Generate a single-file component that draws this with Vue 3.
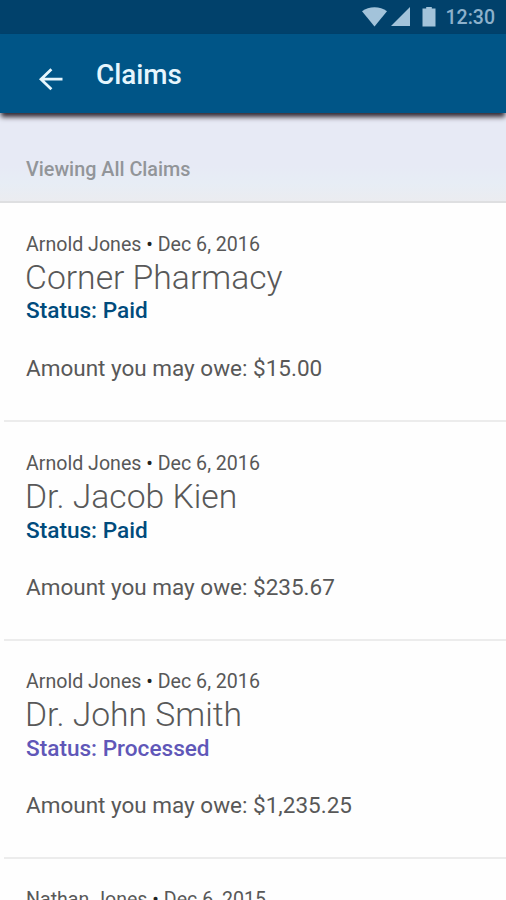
<script setup>
const claims = [
  { person: 'Arnold Jones', date: 'Dec 6, 2016', provider: 'Corner Pharmacy', status: 'Paid', amount: '$15.00' },
  { person: 'Arnold Jones', date: 'Dec 6, 2016', provider: 'Dr. Jacob Kien', status: 'Paid', amount: '$235.67' },
  { person: 'Arnold Jones', date: 'Dec 6, 2016', provider: 'Dr. John Smith', status: 'Processed', amount: '$1,235.25' },
  { person: 'Nathan Jones', date: 'Dec 6, 2015' },
]
</script>

<template>
  <div class="screen">
    <div class="statusbar">
      <svg class="signals" width="74" height="20" viewBox="0 0 74 20">
        <path d="M0 4.2C7-1.2 18-1.2 25 4.2L12.5 19.5z" />
        <path d="M48 0v19H29z" />
        <path d="M60.5 1.5h3.7V0h5.6v1.5h3.7v18h-13z" />
      </svg>
      <span class="time">12:30</span>
    </div>
    <header class="appbar">
      <svg class="back" width="24" height="24" viewBox="0 0 24 24">
        <path d="M23.5 12.2H2M12.4 2.2L2 12.2l10.4 10" />
      </svg>
      <h1>Claims</h1>
    </header>
    <div class="filter"><span>Viewing All Claims</span></div>
    <main>
      <article v-for="(c, i) in claims" :key="i" class="claim">
        <div><span class="meta">{{ c.person }} <b>•</b> {{ c.date }}</span></div>
        <template v-if="c.provider">
          <h2><span>{{ c.provider }}</span></h2>
          <div class="status" :class="c.status.toLowerCase()">Status: {{ c.status }}</div>
          <div class="amount">Amount you may owe: {{ c.amount }}</div>
        </template>
      </article>
    </main>
  </div>
</template>

<style>
body { margin: 0; overflow: hidden; }
</style>

<style scoped>
.screen {
  width: 506px;
  height: 900px;
  overflow: hidden;
  background: #fefefe;
  font-family: Roboto, sans-serif;
  display: flex;
  flex-direction: column;
}
.statusbar {
  height: 34px;
  flex: none;
  background: #01416b;
  display: flex;
  justify-content: flex-end;
  align-items: center;
  gap: 10px;
  padding-right: 11px;
  box-sizing: border-box;
}
.signals { fill: #a3c3da; }
.time { font-size: 19.5px; font-weight: 500; line-height: 34px; color: #8db1cb; padding-top: 2px; }
.appbar {
  height: 79px;
  flex: none;
  background: #005587;
  display: flex;
  align-items: flex-start;
  position: relative;
  z-index: 1;
  padding-left: 39px;
  box-sizing: border-box;
  box-shadow: 0 5px 5px -1px #332b35;
}
.back { margin-top: 33px; fill: none; stroke: #e6f6fd; stroke-width: 2.8; }
h1 { margin: 21px 0 0 33px; font-size: 27.8px; line-height: 40px; font-weight: 500; color: #e6f6fd; }
.filter {
  height: 90px;
  flex: none;
  box-sizing: border-box;
  border-bottom: 2px solid #dedfe1;
  background: linear-gradient(#e7eaf5 60%, #e7edf5 80%, #ebecf0);
  padding: 45px 0 0 26px;
  font-size: 19.8px;
  line-height: 24px;
  font-weight: 500;
  color: #929599;
}
.claim {
  height: 219px;
  box-sizing: border-box;
  padding: 30px 0 0 26px;
  background: linear-gradient(#ececec, #ececec) 4px 100% / 100% 2px no-repeat;
  line-height: 24px;
  color: #585858;
}
.claim:nth-child(n + 3) { height: 218px; padding-top: 29px; }
.meta { font-size: 19.6px; }
.meta b { font-weight: 400; color: #222; }
h2 { margin: 0 0 1px -1px; font-size: 33.7px; line-height: 40px; font-weight: 300; }
.status { font-size: 22.6px; line-height: 26px; font-weight: 500; }
.paid { color: #004b7c; }
.processed { color: #6057b8; }
.amount { margin-top: 29px; font-size: 22.5px; line-height: 28px; }
.claim:first-child h2 { margin-bottom: 0; }
.claim:first-child .amount { margin-top: 30px; }
</style>
